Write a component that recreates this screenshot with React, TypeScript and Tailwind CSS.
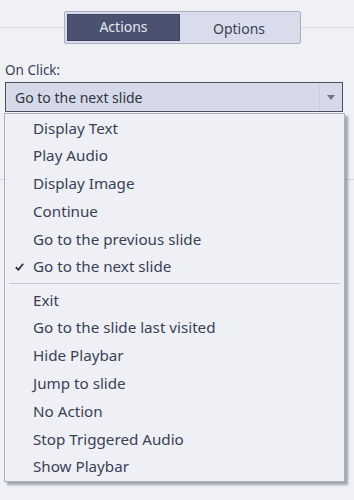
import React from "react";

const topItems = [
  "Display Text",
  "Play Audio",
  "Display Image",
  "Continue",
  "Go to the previous slide",
  "Go to the next slide",
];

const bottomItems = [
  "Exit",
  "Go to the slide last visited",
  "Hide Playbar",
  "Jump to slide",
  "No Action",
  "Stop Triggered Audio",
  "Show Playbar",
];

function MenuItem({ label, checked }: { label: string; checked?: boolean }) {
  return (
    <div className="flex items-center h-[27.8px] text-[15.2px] text-[#3a3f55]">
      <div className="w-[28px] flex justify-center">
        {checked && (
          <svg width="9" height="8" viewBox="0 0 9 8">
            <path d="M0.8 4.2 L3.3 6.8 L8.2 0.8" fill="none" stroke="#2f3340" strokeWidth="1.8" />
          </svg>
        )}
      </div>
      <span>{label}</span>
    </div>
  );
}

function Tabs() {
  return (
    <div className="flex items-center pt-[11px]">
      <div className="w-[64px] h-px bg-[#d8dae1]" />
      <div className="flex w-[237px] h-[33px] p-[2px] border border-[#a9aec0] bg-[#d9ddeb] rounded-[2px]">
        <div className="w-[113px] flex items-center justify-center bg-[#4b5270] border border-[#3d4360] text-[#e4e7f1] text-[14px] pb-[3px]">
          Actions
        </div>
        <div className="flex-1 flex items-center justify-center text-[#3b4052] text-[14px] pt-[1px]">
          Options
        </div>
      </div>
      <div className="flex-1 h-px bg-[#d8dae1]" />
    </div>
  );
}

export default function App() {
  return (
    <div
      className="w-[354px] h-[500px] bg-[#f0f1f5] relative overflow-hidden"
      style={{ fontFamily: '"Noto Sans", "Open Sans", sans-serif' }}
    >
      <Tabs />
      <div className="absolute left-0 right-0 top-[179px] h-px bg-[#d2d4db]" />
      <div className="px-[5px] relative">
        <div className="pt-[16px] text-[13.5px] text-[#3a3f55] leading-[20px]">On Click:</div>
        <div className="mt-[2px] h-[30px] w-[338px] border border-[#4a5068] bg-[#d5d9e8] flex items-center">
          <span className="flex-1 pl-[9px] text-[14px] text-[#2f3442]">Go to the next slide</span>
          <div className="w-px h-[26px] bg-[#eef0f6] border-l border-[#c9cddc]" />
          <div className="w-[22px] flex justify-center">
            <svg width="8" height="5" viewBox="0 0 8 5">
              <path d="M0 0 H8 L4 5 Z" fill="#707586" />
            </svg>
          </div>
        </div>
        <div className="mt-[1px] -ml-[1px] w-[341px] border border-[#aeb2be] bg-[#eff0f5] shadow-[3px_3px_2px_rgba(110,115,130,0.6)]">
          {topItems.map((t) => (
            <MenuItem key={t} label={t} checked={t === "Go to the next slide"} />
          ))}
          <div className="mx-[4px] mt-[2px] mb-[2.3px] h-px bg-[#c6c9d2]" />
          {bottomItems.map((t) => (
            <MenuItem key={t} label={t} />
          ))}
        </div>
      </div>
    </div>
  );
}
